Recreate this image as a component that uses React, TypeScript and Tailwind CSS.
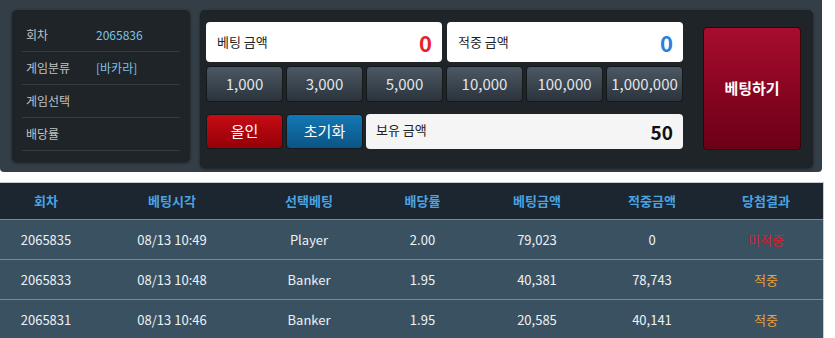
import React from 'react';

const font = { fontFamily: '"Noto Sans CJK KR", "Noto Sans", sans-serif' };

const info = [
  { label: '회차', value: '2065836' },
  { label: '게임분류', value: '[바카라]' },
  { label: '게임선택', value: '' },
  { label: '배당률', value: '' },
];

const chips = ['1,000', '3,000', '5,000', '10,000', '100,000', '1,000,000'];

const rows = [
  { round: '2065835', time: '08/13 10:49', pick: 'Player', odds: '2.00', bet: '79,023', win: '0', result: '미적중' },
  { round: '2065833', time: '08/13 10:48', pick: 'Banker', odds: '1.95', bet: '40,381', win: '78,743', result: '적중' },
  { round: '2065831', time: '08/13 10:46', pick: 'Banker', odds: '1.95', bet: '20,585', win: '40,141', result: '적중' },
];

const cols = 'grid grid-cols-[92px_160px_114px_113px_116px_114px_114px]';

export default function App() {
  return (
    <div className="w-[835px] h-[338px] bg-white overflow-hidden" style={font}>
      {/* Bet panel */}
      <div className="w-[822px] h-[172px] bg-[#343e46] rounded-b-[4px] flex items-start pt-[10px] pl-[12px] gap-[10px]">
        {/* Info card */}
        <div className="w-[178px] h-[152px] bg-[#1e2428] rounded-[5px] shadow-[0_1px_3px_rgba(0,0,0,0.5)] px-[10px] pt-[9px]">
          {info.map((r) => (
            <div key={r.label} className="h-[33px] flex items-center border-b border-[#343c42] text-[12px]">
              <span className="w-[74px] pl-[4px] text-[#bfc3c6]">{r.label}</span>
              <span className="text-[#7cc3e6]">{r.value}</span>
            </div>
          ))}
        </div>

        {/* Betting card */}
        <div className="w-[613px] h-[158px] bg-[#1e2428] rounded-[5px] shadow-[0_1px_3px_rgba(0,0,0,0.5)] flex items-start pl-[6px] pt-[12px]">
          <div className="w-[477px] flex flex-col">
            <div className="flex gap-[5px] h-[40px]">
              <div className="flex-1 bg-white rounded-[4px] flex items-center justify-between pl-[11px] pr-[10px]">
                <span className="text-[13px] text-[#222]">베팅 금액</span>
                <span className="text-[22px] font-bold text-[#e8222c] leading-none">0</span>
              </div>
              <div className="flex-1 bg-white rounded-[4px] flex items-center justify-between pl-[11px] pr-[10px]">
                <span className="text-[13px] text-[#222]">적중 금액</span>
                <span className="text-[22px] font-bold text-[#2a80dc] leading-none">0</span>
              </div>
            </div>

            <div className="grid grid-cols-6 gap-[3px] h-[36px] mt-[4px]">
              {chips.map((c) => (
                <button
                  key={c}
                  className="rounded-[4px] border border-[#15191c] bg-gradient-to-b from-[#4c5864] to-[#2b343c] text-[15px] text-[#e2e5e8]"
                >
                  {c}
                </button>
              ))}
            </div>

            <div className="flex gap-[3px] h-[35px] mt-[12px]">
              <button className="w-[77px] rounded-[4px] border border-[#15191c] bg-gradient-to-b from-[#c50d14] to-[#960008] text-[15px] text-white">
                올인
              </button>
              <button className="w-[77px] rounded-[4px] border border-[#15191c] bg-gradient-to-b from-[#1379b4] to-[#0b5486] text-[15px] text-white">
                초기화
              </button>
              <div className="flex-1 bg-[#f5f5f5] rounded-[4px] flex items-center justify-between pl-[10px] pr-[10px]">
                <span className="text-[13px] text-[#222] self-start mt-[6px]">보유 금액</span>
                <span className="text-[19px] font-bold text-[#111] leading-none">50</span>
              </div>
            </div>
          </div>

          <button className="ml-[20px] mt-[5px] w-[98px] h-[123px] rounded-[4px] border border-[#3a0008] bg-gradient-to-b from-[#a80d2e] to-[#6c0016] text-[15px] font-bold text-white">
            베팅하기
          </button>
        </div>
      </div>

      {/* History table */}
      <div className="mt-[10px] w-[824px] border-t border-r border-[#c8cdd1]">
        <div className={`${cols} h-[36px] bg-[#1b2630] items-center text-[13px] font-bold text-[#4aa3e2] text-center`}>
          <div>회차</div>
          <div>베팅시각</div>
          <div>선택베팅</div>
          <div>배당률</div>
          <div>베팅금액</div>
          <div>적중금액</div>
          <div>당첨결과</div>
        </div>
        {rows.map((r) => (
          <div
            key={r.round}
            className={`${cols} h-[40px] bg-[#3a5162] border-t border-[#6c8ca2] items-center text-[13px] text-[#eef1f3] text-center`}
          >
            <div>{r.round}</div>
            <div>{r.time}</div>
            <div>{r.pick}</div>
            <div>{r.odds}</div>
            <div>{r.bet}</div>
            <div>{r.win}</div>
            <div className={r.result === '적중' ? 'text-[#eba236]' : 'text-[#d7202c]'}>{r.result}</div>
          </div>
        ))}
      </div>
    </div>
  );
}
